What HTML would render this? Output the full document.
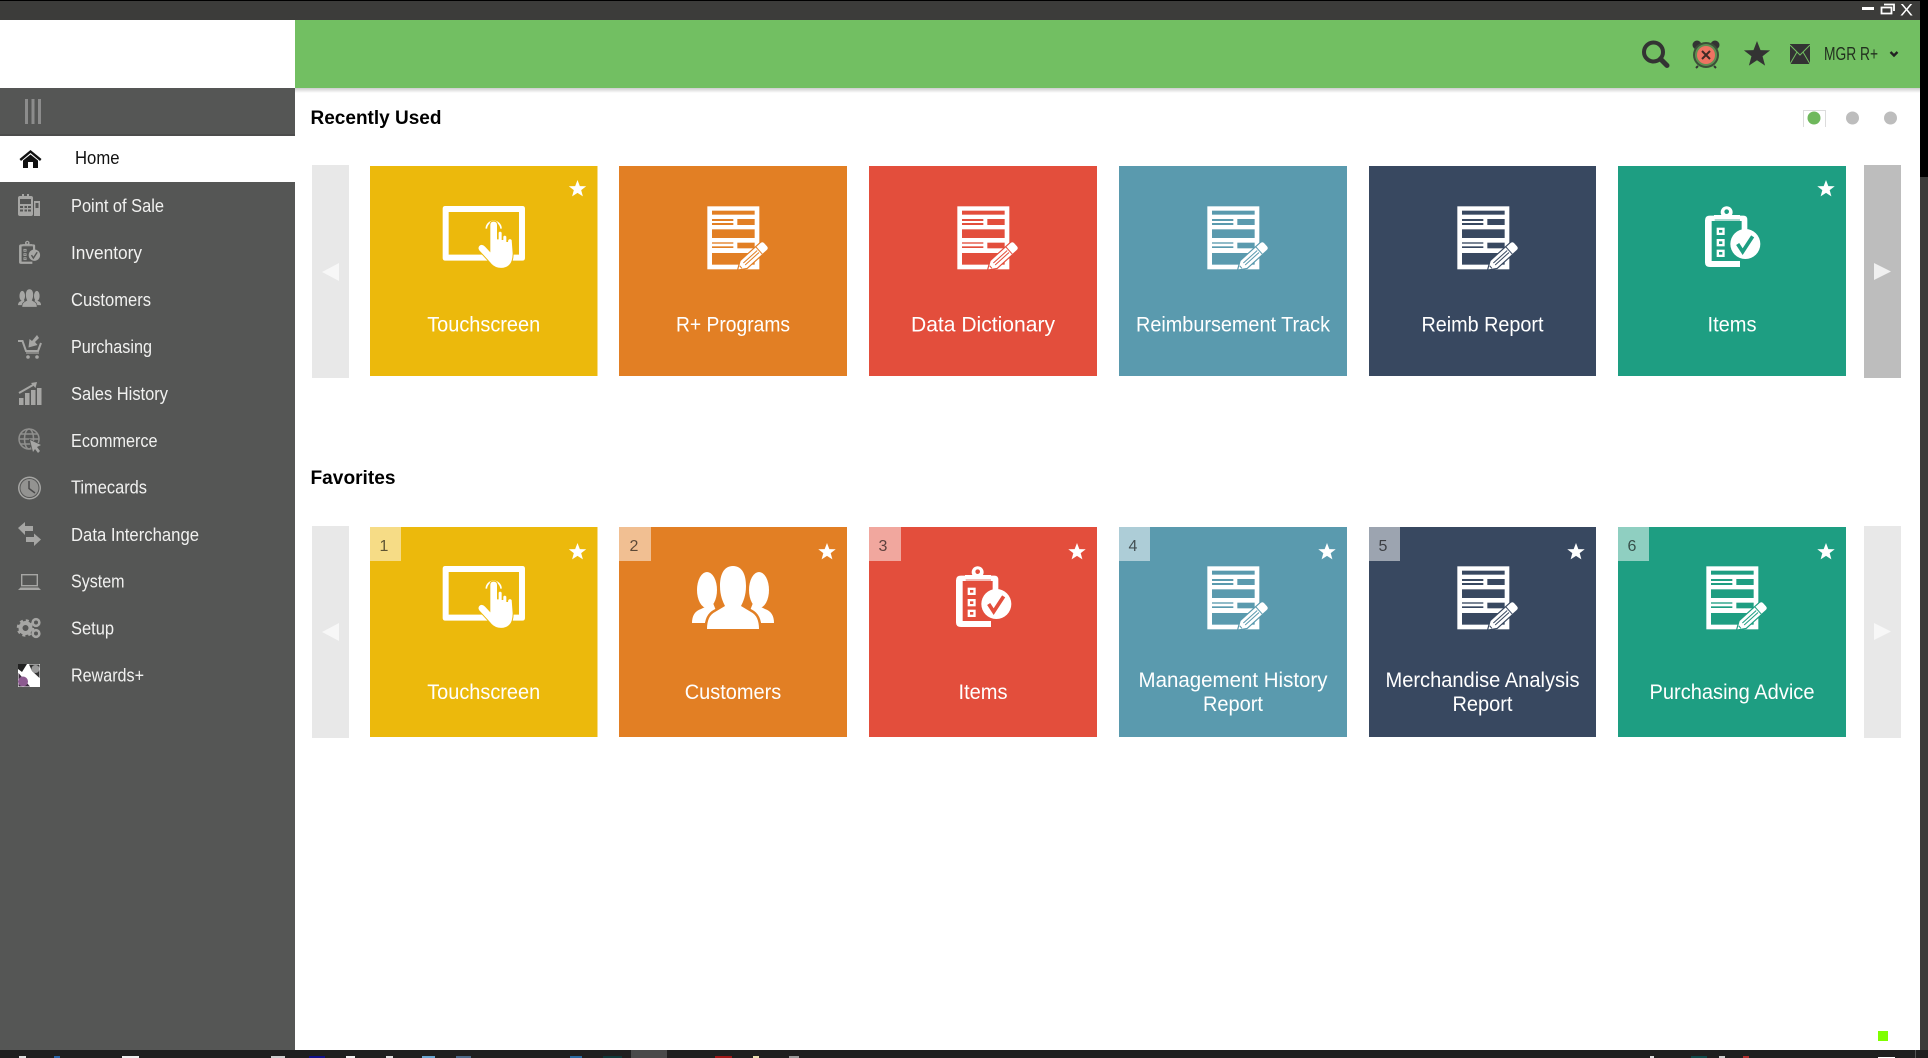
<!DOCTYPE html>
<html lang="en"><head><meta charset="utf-8"><title>Home</title>
<style>
html,body{margin:0;padding:0;width:1928px;height:1058px;overflow:hidden;background:#fff}
svg{display:block}
text{font-family:"Liberation Sans",Arial,sans-serif}
.n{font-size:18px;fill:#f1f1f0}
.t{font-size:21.5px;fill:#fff;text-anchor:middle}
.b{font-size:16px;fill:#000;fill-opacity:.62;text-anchor:middle}
.h{font-size:19px;font-weight:bold;fill:#000}
</style></head><body>
<svg xmlns="http://www.w3.org/2000/svg" width="1928" height="1058" viewBox="0 0 1928 1058">
<defs>
<polygon id="star" points="0,-10 2.6,-3.2 9.7,-3.1 4.1,1.3 6,8.2 0,4.3 -6,8.2 -4.1,1.3 -9.7,-3.1 -2.6,-3.2"/>
<g id="touch" transform="translate(70 24) scale(.3333)">
<path fill="#fff" fill-rule="evenodd" d="M16 48H247Q255 48 255 56V204Q255 212 247 212H16Q8 212 8 204V56Q8 48 16 48ZM26 66V194H237V66Z"/>
<path fill="none" stroke="#fff" stroke-width="5" d="M139 116A22 22 0 1 1 183 116"/>
<path fill="#fff" stroke="#ecb90c" stroke-width="6" paint-order="stroke" stroke-linejoin="round" d="M151 105Q151 95 161 95Q171 95 171 105L171 148L176 148L176 128Q180 122 185 128L185 150L190 150L190 140Q194 134 199 140L199 156L204 156L205 150Q210 145 215 150L218 190Q218 215 207 225Q195 236 175 233Q160 230 150 216L118 181Q112 172 120 166Q128 162 135 170L151 187Z"/>
</g>
<g id="doc" transform="translate(81 28) scale(.3333)">
<rect x="22" y="37" width="156" height="189" fill="#fff"/>
<g fill="currentColor">
<rect x="36" y="50" width="128" height="12"/>
<rect x="36" y="75" width="64" height="6"/><rect x="36" y="87" width="64" height="6"/>
<rect x="112" y="75" width="52" height="18"/>
<rect x="36" y="106" width="128" height="26"/>
<rect x="36" y="145" width="64" height="4"/><rect x="36" y="157" width="64" height="5"/>
<rect x="112" y="146" width="52" height="17"/>
<rect x="36" y="177" width="128" height="35"/>
</g>
<g transform="translate(115 226) rotate(-42)">
<path fill="#fff" stroke="currentColor" stroke-width="7" paint-order="stroke" d="M0 0L22-14H102Q110-14 110-6V6Q110 14 102 14H22Z"/>
<path fill="none" stroke="currentColor" stroke-width="3" d="M84-14V14M24-4H80M24 4H80M10 -5V5"/>
</g>
</g>
<g id="clip" transform="translate(72 29) scale(.3333)">
<path fill-rule="evenodd" d="M60 62H74V76H150V62H160Q172 62 172 74V112H155V78H65V198H150V216H60Q45 216 45 202V76Q45 62 60 62Z"/>
<path fill-rule="evenodd" d="M72 60H94A18 18 0 1 1 126 60H150V74H72ZM110 43A7 7 0 1 0 110.1 57A7 7 0 1 0 110 43Z"/>
<circle cx="166" cy="147" r="45" stroke="currentColor" stroke-width="0"/>
<g><rect x="80" y="98" width="24" height="22"/><rect x="80" y="132" width="24" height="22"/><rect x="80" y="164" width="24" height="22"/></g>
<g fill="currentColor"><rect x="87" y="105" width="10" height="8"/><rect x="87" y="139" width="10" height="8"/><rect x="87" y="171" width="10" height="8"/></g>
<path fill="none" stroke="currentColor" stroke-width="11" d="M143 147L158 170L188 124"/>
</g>
<g id="cust">
<ellipse cx="88" cy="63" rx="10" ry="18"/>
<path d="M73 96Q73 85 82 82L94 76L102 96Z"/>
<ellipse cx="140" cy="63" rx="10" ry="18"/>
<path d="M155 96Q155 85 146 82L134 76L126 96Z"/>
<path stroke="currentColor" stroke-width="5" paint-order="stroke" d="M114 39C124 39 127 49 127 59C127 69 124 75 122 79L132 85Q140 89 140 102H88Q88 89 96 85L106 79C104 75 101 69 101 59C101 49 104 39 114 39Z"/>
</g>
<linearGradient id="sh" x1="0" y1="0" x2="0" y2="1"><stop offset="0" stop-color="#000" stop-opacity=".2"/><stop offset="1" stop-color="#000" stop-opacity="0"/></linearGradient>
</defs>

<!-- window chrome -->
<rect width="1928" height="1058" fill="#fff"/>
<rect x="0" y="0" width="1928" height="20" fill="#3c3c3a"/>
<rect x="0" y="0" width="1928" height="1" fill="#000"/>
<rect x="1920" y="0" width="8" height="177" fill="#000"/>
<rect x="1920" y="177" width="8" height="873" fill="#3c3c3a"/>
<rect x="1862" y="7" width="12" height="3" fill="#fff"/>
<path d="M1881.5 7.5H1891.5V13.5H1881.5ZM1884 4.5H1894V11" fill="none" stroke="#fff" stroke-width="1.8"/>
<text x="1900" y="15.5" font-size="17" fill="#fff" textLength="13" lengthAdjust="spacingAndGlyphs">X</text>

<!-- header -->
<rect x="295" y="20" width="1625" height="68" fill="#72bf62"/>
<rect x="295" y="88" width="1625" height="5" fill="url(#sh)"/>
<circle cx="1653.500" cy="52" r="9.500" fill="none" stroke="#333" stroke-width="4"/>
<path d="M1660.500 59L1667 65.500" stroke="#333" stroke-width="5" stroke-linecap="round"/>
<circle cx="1697" cy="45" r="4.500" fill="#333"/><circle cx="1715" cy="45" r="4.500" fill="#333"/>
<path d="M1698 66L1696 68M1714 66L1716 68" stroke="#333" stroke-width="2"/>
<circle cx="1706" cy="55" r="13" fill="#3c4f38"/><circle cx="1706" cy="55" r="11" fill="#5d8f52"/><circle cx="1706" cy="55" r="9" fill="#ee7362"/>
<path d="M1702 51L1710 59M1710 51L1702 59" stroke="#402a26" stroke-width="2"/>
<use href="#star" transform="translate(1757 54.500) scale(1.35)" fill="#333"/>
<rect x="1790" y="44" width="20" height="20" fill="#333"/>
<path d="M1790 45L1800 55L1810 45M1790 64L1797 52M1810 64L1803 52" fill="none" stroke="#72bf62" stroke-width="1"/>
<text x="1824" y="60" font-size="18" fill="#22301f" textLength="54" lengthAdjust="spacingAndGlyphs">MGR R+</text>
<path d="M1890.5 52L1894 55.5L1897.5 52" fill="none" stroke="#222" stroke-width="2.4"/>

<!-- sidebar -->
<rect x="0" y="88" width="295" height="962" fill="#555655"/>
<rect x="0" y="134" width="295" height="2" fill="#4c4c4c"/>
<rect x="25" y="99" width="3" height="25" fill="#8c8c8c"/><rect x="31.5" y="99" width="3" height="25" fill="#8c8c8c"/><rect x="38" y="99" width="3" height="25" fill="#8c8c8c"/>
<rect x="0" y="136" width="295" height="46" fill="#fff"/>
<path fill="#111" d="M19.5 159L30.5 150L41.5 159L40 161L30.5 153L21 161Z"/>
<path fill="#111" d="M23 160.5L30.5 154.5L38 160.5V168H33V162H28V168H23Z"/>
<text x="75" y="164" font-size="18" fill="#111" textLength="44.500" lengthAdjust="spacingAndGlyphs">Home</text>

<g fill="#a6a6a4">
<!-- pos -->
<path fill-rule="evenodd" d="M20 196H22V194H24V196H27V194H29V196H31Q33 196 33 198V214Q33 216 31 216H20Q18 216 18 214V198Q18 196 20 196ZM20 199V204H31V199ZM20 206V208H23V206ZM24.500 206V208H27V206ZM28 206V208H31V206ZM20 209.500V211.500H23V209.500ZM24.500 209.500V211.500H27V209.500ZM28 209.500V211.500H31V209.500Z"/>
<path fill-rule="evenodd" d="M34 201H40V216H34ZM35.500 203V208H38.500V203Z"/>
<!-- inventory -->
<use href="#clip" transform="translate(-14 225.500) scale(.38)" fill="#a6a6a4" color="#555655"/>
<!-- customers -->
<use href="#cust" transform="translate(-2.400 278.300) scale(.28)" fill="#a6a6a4" color="#555655"/>
<!-- purchasing -->
<path fill="none" stroke="#a6a6a4" stroke-width="2" d="M18 341H22.500L26 351H38L41 343"/>
<path fill="none" stroke="#a6a6a4" stroke-width="1.200" d="M26 353H39"/>
<circle cx="28" cy="357" r="1.800"/><circle cx="37" cy="357" r="1.800"/>
<path d="M37 335L39 338L35 342L37.500 345L28.500 347.500L29.500 339L32 341Z"/>
<!-- sales -->
<rect x="19" y="398" width="4.500" height="7"/><rect x="25" y="393" width="4.500" height="12"/><rect x="31" y="390" width="4.500" height="15"/><rect x="37" y="388" width="4.500" height="17"/>
<path fill="none" stroke="#a6a6a4" stroke-width="2" d="M19 393L33 385"/><path d="M37 382L35.500 388L31 383Z"/>
<!-- ecommerce -->
<g fill="none" stroke="#8f8f8d" stroke-width="1.500"><circle cx="29" cy="439" r="10"/><ellipse cx="29" cy="439" rx="4.500" ry="10"/><path d="M19 439H39M20.500 434H37.500M20.500 444H37.500"/></g>
<path stroke="#555655" stroke-width="1.500" paint-order="stroke" d="M30 440L41 445L37 447L40 451L38 453L35 449L33 452Z"/>
<!-- timecards -->
<circle cx="29.500" cy="488" r="11.500"/><circle cx="29.500" cy="488" r="10" fill="#555655"/><circle cx="29.500" cy="488" r="9" fill="#939391"/>
<path d="M29 481V488.500L35 493" fill="none" stroke="#4a4a4a" stroke-width="1.500"/>
<!-- data interchange -->
<path d="M18 528L25 522V526H33V531H25V535Z"/>
<path d="M41 539.500L34 533.500V537H26V542H34V546Z"/>
<!-- system -->
<rect x="21.700" y="574.700" width="15.600" height="11" fill="none" stroke="#a6a6a4" stroke-width="1.400"/>
<path d="M18 590L20.500 587.500H38.500L41 590Z"/>
<!-- setup -->
<circle cx="25.500" cy="628" r="5" fill="none" stroke="#a6a6a4" stroke-width="4"/>
<circle cx="25.500" cy="628" r="7.500" fill="none" stroke="#a6a6a4" stroke-width="2.500" stroke-dasharray="3 2.900"/>
<circle cx="36" cy="622.500" r="3.300" fill="none" stroke="#a6a6a4" stroke-width="2.600"/>
<circle cx="36" cy="633.500" r="3.300" fill="none" stroke="#a6a6a4" stroke-width="2.600"/>
</g>
<!-- rewards -->
<rect x="18" y="664" width="22" height="23" fill="#fff"/>
<path d="M18 664H27L22 672L18 669Z" fill="#222"/>
<path d="M29 664.500H39.500V678L32 671Z" fill="#333"/>
<circle cx="35.500" cy="669" r="4" fill="#9a9a9a"/>
<path d="M18.500 673L30 686.500H18.500Z" fill="#3a2a3c"/>
<ellipse cx="23" cy="681.500" rx="5" ry="5" fill="#8c5a90"/>

<text class="n" x="71" y="212" textLength="93" lengthAdjust="spacingAndGlyphs">Point of Sale</text>
<text class="n" x="71" y="259" textLength="71" lengthAdjust="spacingAndGlyphs">Inventory</text>
<text class="n" x="71" y="306" textLength="80" lengthAdjust="spacingAndGlyphs">Customers</text>
<text class="n" x="71" y="353" textLength="81" lengthAdjust="spacingAndGlyphs">Purchasing</text>
<text class="n" x="71" y="400" textLength="97" lengthAdjust="spacingAndGlyphs">Sales History</text>
<text class="n" x="71" y="447" textLength="86.500" lengthAdjust="spacingAndGlyphs">Ecommerce</text>
<text class="n" x="71" y="493.500" textLength="76" lengthAdjust="spacingAndGlyphs">Timecards</text>
<text class="n" x="71" y="541" textLength="128" lengthAdjust="spacingAndGlyphs">Data Interchange</text>
<text class="n" x="71" y="587.500" textLength="53.500" lengthAdjust="spacingAndGlyphs">System</text>
<text class="n" x="71" y="634.500" textLength="43" lengthAdjust="spacingAndGlyphs">Setup</text>
<text class="n" x="71" y="681.500" textLength="73" lengthAdjust="spacingAndGlyphs">Rewards+</text>

<!-- headings -->
<text class="h" x="310.500" y="124" textLength="131" lengthAdjust="spacingAndGlyphs">Recently Used</text>
<text class="h" x="310.500" y="484" textLength="85" lengthAdjust="spacingAndGlyphs">Favorites</text>

<!-- pager -->
<path d="M1803.500 127V110.500H1825.500V127" fill="none" stroke="#dcdcdc"/>
<circle cx="1814" cy="118" r="6.500" fill="#6fb85c"/>
<circle cx="1852.500" cy="118" r="6.500" fill="#bdbdbd"/>
<circle cx="1890.500" cy="118" r="6.500" fill="#bdbdbd"/>

<!-- arrows -->
<rect x="312" y="165" width="37" height="213" fill="#e8e8e8"/>
<polygon points="322,272 339,263 339,281" fill="#f7f7f7"/>
<rect x="1864" y="165" width="37" height="213" fill="#bdbdbd"/>
<polygon points="1891,271.500 1874,263 1874,280" fill="#f0f0f0"/>
<rect x="312" y="526" width="37" height="212" fill="#e8e8e8"/>
<polygon points="322,632 339,623 339,641" fill="#f7f7f7"/>
<rect x="1864" y="526" width="37" height="212" fill="#e8e8e8"/>
<polygon points="1891,631.500 1874,623 1874,640" fill="#f7f7f7"/>

<!-- row 1 -->
<rect x="370" y="166" width="227.500" height="210" fill="#ecb90c"/>
<use href="#touch" transform="translate(370 166)"/>
<use href="#star" transform="translate(577.500 189) scale(.9)" fill="#fff"/>
<text class="t" x="483.700" y="331.500" textLength="113" lengthAdjust="spacingAndGlyphs">Touchscreen</text>

<rect x="619" y="166" width="228" height="210" fill="#e27f24"/>
<use href="#doc" transform="translate(619 166)" fill="#fff" color="#e27f24"/>
<text class="t" x="733" y="331.500" textLength="114" lengthAdjust="spacingAndGlyphs">R+ Programs</text>

<rect x="869" y="166" width="228" height="210" fill="#e34e3c"/>
<use href="#doc" transform="translate(869 166)" fill="#fff" color="#e34e3c"/>
<text class="t" x="983" y="331.500" textLength="144" lengthAdjust="spacingAndGlyphs">Data Dictionary</text>

<rect x="1119" y="166" width="228" height="210" fill="#5a9aae"/>
<use href="#doc" transform="translate(1119 166)" fill="#fff" color="#5a9aae"/>
<text class="t" x="1233" y="331.500" textLength="194" lengthAdjust="spacingAndGlyphs">Reimbursement Track</text>

<rect x="1369" y="166" width="227" height="210" fill="#384860"/>
<use href="#doc" transform="translate(1369 166)" fill="#fff" color="#384860"/>
<text class="t" x="1482.500" y="331.500" textLength="122" lengthAdjust="spacingAndGlyphs">Reimb Report</text>

<rect x="1618" y="166" width="228" height="210" fill="#1e9e82"/>
<use href="#clip" transform="translate(1618 166)" fill="#fff" color="#1e9e82"/>
<use href="#star" transform="translate(1826 189) scale(.9)" fill="#fff"/>
<text class="t" x="1732" y="331.500" textLength="49" lengthAdjust="spacingAndGlyphs">Items</text>

<!-- row 2 -->
<rect x="370" y="527" width="227.500" height="210" fill="#ecb90c"/>
<use href="#touch" transform="translate(370 526)"/>
<rect x="370" y="527" width="31" height="34" fill="#fff" fill-opacity=".5"/>
<text class="b" x="384" y="551">1</text>
<use href="#star" transform="translate(577.500 552) scale(.9)" fill="#fff"/>
<text class="t" x="483.700" y="699" textLength="113" lengthAdjust="spacingAndGlyphs">Touchscreen</text>

<rect x="619" y="527" width="228" height="210" fill="#e27f24"/>
<use href="#cust" transform="translate(619 527)" fill="#fff" color="#e27f24"/>
<rect x="619" y="527" width="32" height="34" fill="#fff" fill-opacity=".5"/>
<text class="b" x="634" y="551">2</text>
<use href="#star" transform="translate(827 552) scale(.9)" fill="#fff"/>
<text class="t" x="733" y="699" textLength="96.500" lengthAdjust="spacingAndGlyphs">Customers</text>

<rect x="869" y="527" width="228" height="210" fill="#e34e3c"/>
<use href="#clip" transform="translate(869 526)" fill="#fff" color="#e34e3c"/>
<rect x="869" y="527" width="32" height="34" fill="#fff" fill-opacity=".5"/>
<text class="b" x="883" y="551">3</text>
<use href="#star" transform="translate(1077 552) scale(.9)" fill="#fff"/>
<text class="t" x="983" y="699" textLength="49" lengthAdjust="spacingAndGlyphs">Items</text>

<rect x="1119" y="527" width="228" height="210" fill="#5a9aae"/>
<use href="#doc" transform="translate(1119 526)" fill="#fff" color="#5a9aae"/>
<rect x="1119" y="527" width="31" height="34" fill="#fff" fill-opacity=".5"/>
<text class="b" x="1133" y="551">4</text>
<use href="#star" transform="translate(1327 552) scale(.9)" fill="#fff"/>
<text class="t" x="1233" y="687" textLength="189" lengthAdjust="spacingAndGlyphs">Management History</text>
<text class="t" x="1233" y="711" textLength="60" lengthAdjust="spacingAndGlyphs">Report</text>

<rect x="1369" y="527" width="227" height="210" fill="#384860"/>
<use href="#doc" transform="translate(1369 526)" fill="#fff" color="#384860"/>
<rect x="1369" y="527" width="31" height="34" fill="#fff" fill-opacity=".5"/>
<text class="b" x="1383" y="551">5</text>
<use href="#star" transform="translate(1576 552) scale(.9)" fill="#fff"/>
<text class="t" x="1482.500" y="687" textLength="194" lengthAdjust="spacingAndGlyphs">Merchandise Analysis</text>
<text class="t" x="1482.500" y="711" textLength="60" lengthAdjust="spacingAndGlyphs">Report</text>

<rect x="1618" y="527" width="228" height="210" fill="#1e9e82"/>
<use href="#doc" transform="translate(1618 526)" fill="#fff" color="#1e9e82"/>
<rect x="1618" y="527" width="31" height="34" fill="#fff" fill-opacity=".5"/>
<text class="b" x="1632" y="551">6</text>
<use href="#star" transform="translate(1826 552) scale(.9)" fill="#fff"/>
<text class="t" x="1732" y="699" textLength="165" lengthAdjust="spacingAndGlyphs">Purchasing Advice</text>

<!-- status square -->
<rect x="1878" y="1031" width="10" height="10" fill="#7fff00"/>

<!-- taskbar -->
<rect x="0" y="1050" width="1928" height="8" fill="#1f1f1f"/>
<rect x="631" y="1050" width="36" height="8" fill="#4a4a4a"/>
<rect x="1915" y="1050" width="1" height="8" fill="#555"/>
<g>
<rect x="19" y="1056" width="7" height="2" fill="#ddd"/>
<rect x="54" y="1056" width="6" height="2" fill="#2a66a8"/>
<rect x="122" y="1056" width="17" height="2" fill="#eee"/>
<rect x="271" y="1056" width="14" height="2" fill="#ccc"/>
<rect x="309" y="1056" width="16" height="2" fill="#10108a"/>
<rect x="346" y="1056" width="9" height="2" fill="#eee"/>
<rect x="386" y="1056" width="7" height="2" fill="#ddd"/>
<rect x="422" y="1056" width="13" height="2" fill="#6aa6d0"/>
<rect x="456" y="1056" width="15" height="2" fill="#4d6a88"/>
<rect x="570" y="1056" width="12" height="2" fill="#2a6aa0"/>
<rect x="603" y="1056" width="19" height="2" fill="#103a3a"/>
<rect x="715" y="1056" width="17" height="2" fill="#a01818"/>
<rect x="753" y="1056" width="6" height="2" fill="#e8dcae"/>
<rect x="789" y="1056" width="10" height="2" fill="#999"/>
<rect x="1650" y="1056" width="4" height="2" fill="#ddd"/>
<rect x="1691" y="1056" width="16" height="2" fill="#0f4a4a"/>
<rect x="1719" y="1056" width="6" height="2" fill="#ccc"/>
<rect x="1743" y="1056" width="6" height="2" fill="#b03030"/>
<rect x="1878" y="1057" width="17" height="1" fill="#fff"/>
</g>
</svg>
</body></html>
